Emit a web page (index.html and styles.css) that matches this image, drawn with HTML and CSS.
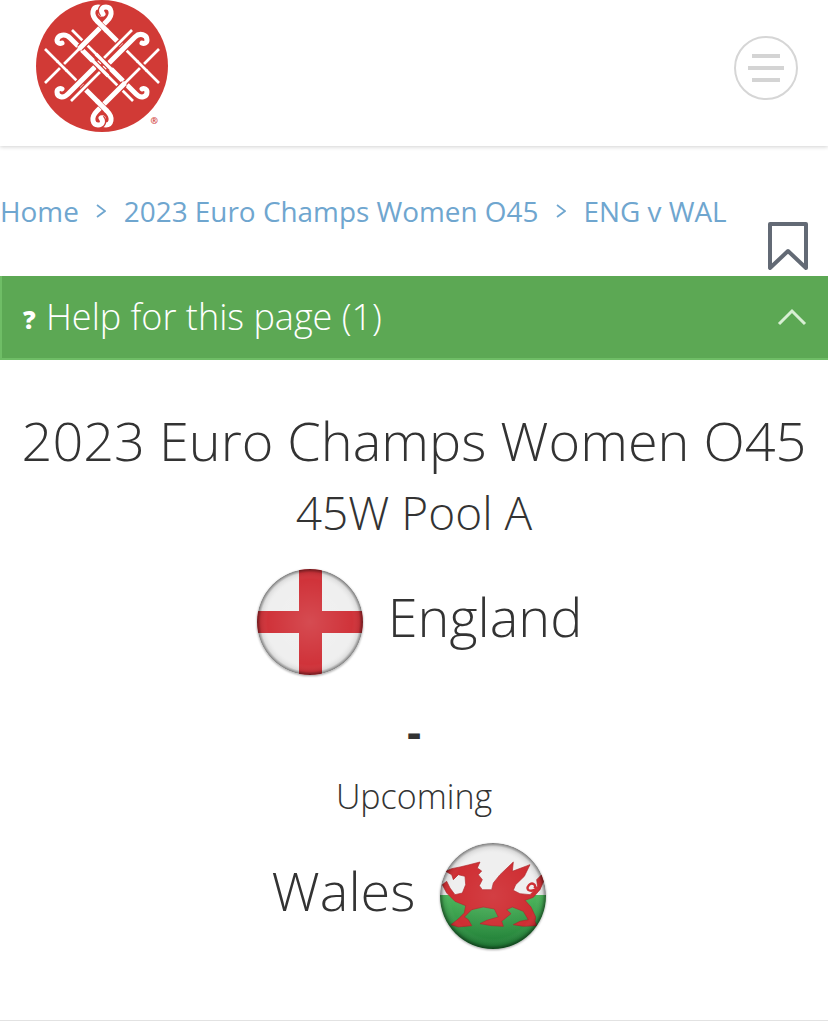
FILE: index.html
```html
<!DOCTYPE html>
<html lang="en">
<head>
<meta charset="utf-8">
<title>ENG v WAL</title>
<link rel="stylesheet" href="styles.css">
</head>
<body>
<header class="site-header">
  <svg class="logo" viewBox="0 0 132 132" aria-label="logo">
    <defs>
      <path id="a1n" d="M123 83 L61 21"/>
      <path id="a1k" d="M88 48 L61 21 C54 14 57 7 62 7 C66 7 68 10 65 14"/>
      <path id="a2n" d="M9 49 L71 111"/>
      <path id="a2k" d="M44 84 L71 111 C78 118 75 125 70 125 C66 125 64 122 67 118"/>
      <path id="c1n" d="M97 101 L34 38"/>
      <path id="c1k" d="M66 70 L34 38 C29 33 22 35 21 40 C21 43 24 44 26 43"/>
      <path id="c2n" d="M36 30 L100 94"/>
      <path id="c2k" d="M66 60 L100 94 C105 99 111 97 111 92 C111 89 108 88 106 89"/>
      <path id="b1n" d="M9 83 L71 21"/>
      <path id="b1k" d="M44 48 L71 21 C78 14 75 7 70 7 C66 7 64 10 67 14"/>
      <path id="b2n" d="M123 49 L61 111"/>
      <path id="b2k" d="M88 84 L61 111 C54 118 57 125 62 125 C66 125 68 122 65 118"/>
      <path id="e1n" d="M96 30 L32 94"/>
      <path id="e1k" d="M66 60 L32 94 C27 99 21 97 21 92 C21 89 24 88 26 89"/>
      <path id="e2n" d="M35 101 L99 37"/>
      <path id="e2k" d="M66 70 L99 37 C104 32 111 35 111 40 C111 43 108 44 106 43"/>
    </defs>
    <circle cx="66" cy="66" r="66" class="logo-disc"/>
    <g class="case-thin"><use href="#a1n"/><use href="#a2n"/><use href="#c1n"/><use href="#c2n"/></g>
    <g class="ink-thin"><use href="#a1n"/><use href="#a2n"/><use href="#c1n"/><use href="#c2n"/></g>
    <g class="ink-thick"><use href="#a1k"/><use href="#a2k"/><use href="#c1k"/><use href="#c2k"/></g>
    <g class="case-thin"><use href="#b1n"/><use href="#b2n"/><use href="#e1n"/><use href="#e2n"/></g>
    <g class="case-thick"><use href="#b1k"/><use href="#b2k"/><use href="#e1k"/><use href="#e2k"/></g>
    <g class="ink-thin"><use href="#b1n"/><use href="#b2n"/><use href="#e1n"/><use href="#e2n"/></g>
    <g class="ink-thick"><use href="#b1k"/><use href="#b2k"/><use href="#e1k"/><use href="#e2k"/></g>
    <g class="patch-case">
      <path d="M22 62 L30 70"/><path d="M62 102 L70 110"/><path d="M62 22 L70 30"/><path d="M102 62 L110 70"/>
      <path d="M57 61 L65 69"/><path d="M62 66 L70 74"/><path d="M62 56 L70 64"/><path d="M67 61 L75 69"/>
    </g>
    <g class="patch-thin">
      <path d="M21 61 L31 71"/><path d="M101 61 L111 71"/>
    </g>
    <g class="patch-thick">
      <path d="M61 101 L71 111"/><path d="M61 21 L71 31"/>
    </g>
    <g class="patch-mid">
      <path d="M55 59 L72 76"/><path d="M60 54 L77 71"/>
    </g>
    <text x="114.5" y="124" class="logo-reg">®</text>
  </svg>
  <button class="menu-button" aria-label="Menu">
    <span class="menu-line short"></span>
    <span class="menu-line"></span>
    <span class="menu-line short"></span>
  </button>
</header>

<nav class="breadcrumb">
  <a href="#">Home</a>
  <svg class="crumb-sep" viewBox="0 0 10 14"><path d="M1 1 L9 7 L1 13"/></svg>
  <a href="#">2023 Euro Champs Women O45</a>
  <svg class="crumb-sep" viewBox="0 0 10 14"><path d="M1 1 L9 7 L1 13"/></svg>
  <a href="#">ENG v WAL</a>
</nav>
<div class="bookmark-row">
  <svg class="bookmark" viewBox="0 0 40 48"><path d="M2 2 H38 V46 L20 29 L2 46 Z"/></svg>
</div>

<section class="help-bar">
  <span class="help-label"><b class="help-mark">?</b> Help for this page (1)</span>
  <svg class="help-chevron" viewBox="0 0 30 18"><path d="M2 16 L15 3 L28 16"/></svg>
</section>

<main class="match">
  <h1 class="event">2023 Euro Champs Women O45</h1>
  <h2 class="pool">45W Pool A</h2>

  <div class="team team-home">
    <svg class="flag" viewBox="0 0 108 108">
      <defs>
        <clipPath id="disc1"><circle cx="54" cy="54" r="53"/></clipPath>
        <radialGradient id="shade1" cx="50%" cy="50%" r="50%">
          <stop offset="0%" stop-color="#fff" stop-opacity=".12"/>
          <stop offset="80%" stop-color="#fff" stop-opacity="0"/>
          <stop offset="93%" stop-color="#000" stop-opacity=".08"/>
          <stop offset="100%" stop-color="#000" stop-opacity=".5"/>
        </radialGradient>
      </defs>
      <g clip-path="url(#disc1)">
        <rect width="108" height="108" class="flag-white"/>
        <rect x="43" width="23" height="108" class="flag-red"/>
        <rect y="43" width="108" height="22" class="flag-red"/>
        <circle cx="54" cy="54" r="53" fill="url(#shade1)"/>
      </g>
    </svg>
    <span class="team-name">England</span>
  </div>

  <div class="score">-</div>
  <div class="status">Upcoming</div>

  <div class="team team-away">
    <span class="team-name">Wales</span>
    <svg class="flag" viewBox="0 0 108 108">
      <defs>
        <clipPath id="disc2"><circle cx="54" cy="54" r="53"/></clipPath>
        <linearGradient id="green" x1="0" y1="0" x2="0" y2="1">
          <stop offset="0%" stop-color="#4db65c"/>
          <stop offset="100%" stop-color="#1d7a34"/>
        </linearGradient>
        <radialGradient id="shade2" cx="50%" cy="50%" r="50%">
          <stop offset="0%" stop-color="#fff" stop-opacity=".08"/>
          <stop offset="80%" stop-color="#fff" stop-opacity="0"/>
          <stop offset="93%" stop-color="#000" stop-opacity=".1"/>
          <stop offset="100%" stop-color="#000" stop-opacity=".5"/>
        </radialGradient>
      </defs>
      <g clip-path="url(#disc2)">
        <rect width="108" height="54" class="flag-white"/>
        <rect y="53" width="108" height="55" fill="url(#green)"/>
        <g transform="translate(-14 -12.330) scale(.3333)">
          <path class="dragon" d="M62 125 L80 117 L105 112 L130 106 L165 97 L157 115 L170 124 L160 135 L172 150 L163 168 L172 180 L200 180 L205 160 L225 135 L265 97 L262 125 L315 105 L298 140 L272 165 L265 182 L285 192 L315 195 L338 172 L335 150 L350 135 L356 155 L345 180 L325 203 L300 212 L318 232 L332 262 L330 275 L335 288 L295 290 L265 285 L285 275 L310 270 L295 245 L262 232 L245 240 L258 252 L230 275 L235 290 L200 288 L165 282 L185 272 L220 262 L208 238 L175 232 L140 240 L118 262 L130 270 L140 288 L100 292 L78 285 L100 268 L118 250 L122 228 L90 215 L65 190 L52 165 L65 155 L75 175 L90 195 L112 190 L122 165 L120 140 L100 135 L85 150 L80 135 Z"/>
          <path class="dragon-tail" d="M338 172 C320 192 298 182 312 166 C322 156 336 166 328 176"/>
        </g>
        <circle cx="54" cy="54" r="53" fill="url(#shade2)"/>
      </g>
    </svg>
  </div>
</main>
<hr class="rule">
</body>
</html>
```

FILE: styles.css
```css
* { box-sizing: border-box; }
html, body { margin: 0; padding: 0; }
body {
  position: relative;
  width: 828px;
  height: 1021px;
  overflow: hidden;
  background: #fff;
  color: #333;
  font-family: "Open Sans", sans-serif;
}
.site-header {
  height: 146px;
  display: flex;
  justify-content: space-between;
  align-items: flex-start;
  padding: 0 30px 0 36px;
  box-shadow: 0 1px 4px rgba(0, 0, 0, .18);
}
.logo { width: 132px; height: 132px; display: block; overflow: visible; }
.logo-disc { fill: #d13a36; }
.logo-reg { font-size: 9px; font-weight: 700; fill: #d13a36; }
.case-thin, .case-thick, .ink-thin, .ink-thick, .patch-case, .patch-thin, .patch-thick, .patch-mid {
  fill: none;
}
.case-thin { stroke: #d13a36; stroke-width: 5.5; }
.case-thick { stroke: #d13a36; stroke-width: 7.5; }
.ink-thin { stroke: #fff; stroke-width: 2.6; }
.ink-thick { stroke: #fff; stroke-width: 5; stroke-linecap: round; }
.patch-case { stroke: #d13a36; stroke-width: 6; }
.patch-thin { stroke: #fff; stroke-width: 2.6; }
.patch-thick { stroke: #fff; stroke-width: 5; }
.patch-mid { stroke: #fff; stroke-width: 3.4; }
.menu-button {
  width: 64px;
  height: 64px;
  margin-top: 36px;
  padding: 0;
  border: 2px solid #d6d6d6;
  border-radius: 50%;
  background: #fff;
  display: flex;
  flex-direction: column;
  align-items: center;
  justify-content: center;
  gap: 8px;
}
.menu-line { display: block; width: 36px; height: 4px; background: #d4d4d4; }
.menu-line.short { width: 28px; }
.breadcrumb {
  height: 76px;
  padding-top: 46px;
  display: flex;
  align-items: flex-start;
  font-size: 27.9px;
  line-height: 38px;
  white-space: nowrap;
}
.breadcrumb a { color: #6fa6cf; text-decoration: none; }
.crumb-sep {
  width: 10px;
  height: 14px;
  margin: 12px 17.5px 0 17.5px;
  fill: none;
  stroke: #6fa6cf;
  stroke-width: 1.8;
}
.bookmark-row { height: 54px; display: flex; justify-content: flex-end; padding-right: 20px; }
.bookmark {
  width: 40px;
  height: 48px;
  fill: none;
  stroke: #636a75;
  stroke-width: 4;
  stroke-linejoin: round;
}
.help-bar {
  height: 84px;
  background: #5ca854;
  border-left: 2px solid #6fbd66;
  border-bottom: 2px solid #6fbd66;
  color: #fff;
  display: flex;
  align-items: center;
  justify-content: space-between;
  padding: 0 21px;
}
.help-label { font-size: 36px; font-weight: 300; white-space: nowrap; margin-top: -2px; }
.help-mark { font-size: 25px; font-weight: 800; vertical-align: 1px; margin-right: 1px; }
.help-chevron { width: 30px; height: 18px; fill: none; stroke: #d8efd4; stroke-width: 3; }
.match { text-align: center; }
.event { margin: 46px 0 0; font-size: 54px; line-height: 68px; font-weight: 300; white-space: nowrap; }
.pool { margin: 8px 0 0; font-size: 46px; line-height: 60px; font-weight: 300; }
.team { display: flex; justify-content: center; align-items: center; gap: 24px; }
.team-home { margin-top: 26px; padding-left: 10px; }
.team-away { margin-top: 23px; padding-right: 9px; }
.team-name { font-size: 54px; font-weight: 300; line-height: 108px; margin-top: -12px; }
.flag { width: 108px; height: 108px; display: block; filter: drop-shadow(0 1px 1px rgba(0, 0, 0, .35)); }
.flag-white { fill: #efefef; }
.flag-red { fill: #d0333a; }
.dragon { fill: #cf2e33; stroke: #b02428; stroke-width: 2; stroke-linejoin: round; }
.dragon-tail { fill: none; stroke: #cf2e33; stroke-width: 7; }
.score { margin-top: 33px; font-size: 44px; font-weight: 700; line-height: 44px; }
.status { margin-top: 20px; font-size: 34px; font-weight: 300; line-height: 46px; }
.rule { position: absolute; top: 1020px; left: 0; width: 828px; margin: 0; border: 0; border-top: 1px solid #e2e2e2; }
```
